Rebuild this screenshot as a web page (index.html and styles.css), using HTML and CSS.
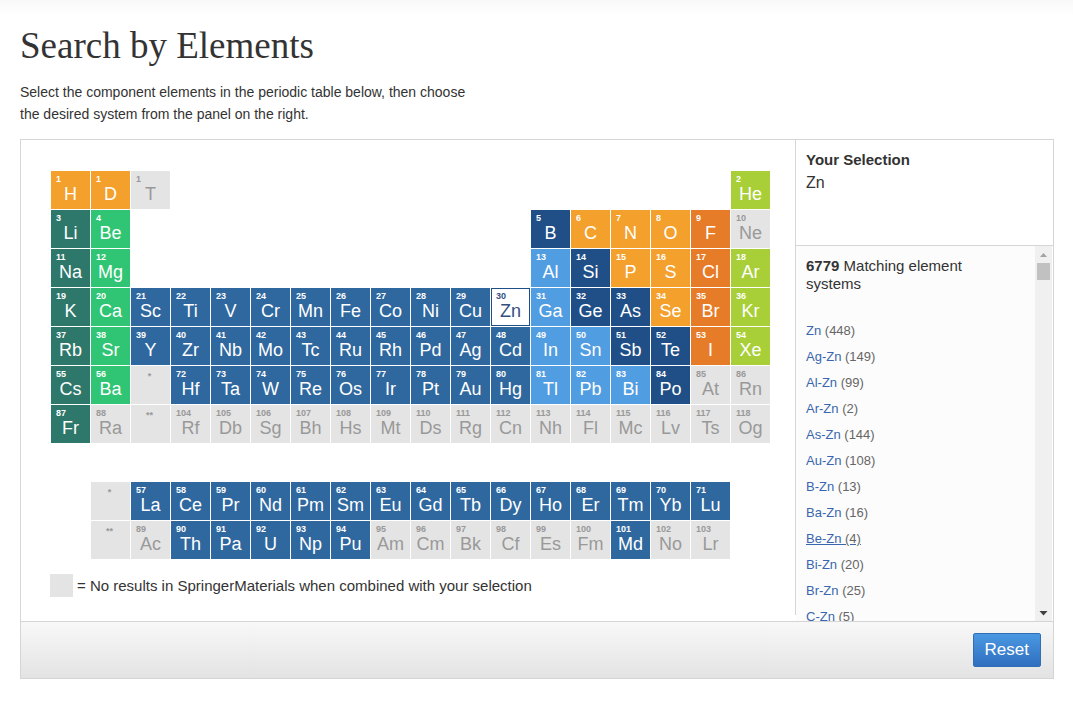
FILE: index.html
```html
<!DOCTYPE html>
<html lang="en">
<head>
<meta charset="utf-8">
<meta name="viewport" content="width=device-width, initial-scale=1">
<title>Search by Elements</title>
<link rel="stylesheet" href="styles.css">
</head>
<body>
<main class="page">
<h1 class="title">Search by Elements</h1>
<p class="intro">Select the component elements in the periodic table below, then choose the desired system from the panel on the right.</p>
<section class="panel">
<div class="content">
<div class="chart">
<div class="elements">
<button class="el nonmetal"><small>1</small>H</button>
<button class="el nonmetal"><small>1</small>D</button>
<button class="el none"><small>1</small>T</button>
<button class="el noble last"><small>2</small>He</button>

<button class="el alkali"><small>3</small>Li</button>
<button class="el earth"><small>4</small>Be</button>
<button class="el metalloid boron"><small>5</small>B</button>
<button class="el nonmetal"><small>6</small>C</button>
<button class="el nonmetal"><small>7</small>N</button>
<button class="el nonmetal"><small>8</small>O</button>
<button class="el halogen"><small>9</small>F</button>
<button class="el none"><small>10</small>Ne</button>

<button class="el alkali"><small>11</small>Na</button>
<button class="el earth"><small>12</small>Mg</button>
<button class="el post boron"><small>13</small>Al</button>
<button class="el metalloid"><small>14</small>Si</button>
<button class="el nonmetal"><small>15</small>P</button>
<button class="el nonmetal"><small>16</small>S</button>
<button class="el halogen"><small>17</small>Cl</button>
<button class="el noble"><small>18</small>Ar</button>

<button class="el alkali"><small>19</small>K</button>
<button class="el earth"><small>20</small>Ca</button>
<button class="el metal"><small>21</small>Sc</button>
<button class="el metal"><small>22</small>Ti</button>
<button class="el metal"><small>23</small>V</button>
<button class="el metal"><small>24</small>Cr</button>
<button class="el metal"><small>25</small>Mn</button>
<button class="el metal"><small>26</small>Fe</button>
<button class="el metal"><small>27</small>Co</button>
<button class="el metal"><small>28</small>Ni</button>
<button class="el metal"><small>29</small>Cu</button>
<button class="el selected" aria-pressed="true"><small>30</small>Zn</button>
<button class="el post"><small>31</small>Ga</button>
<button class="el metalloid"><small>32</small>Ge</button>
<button class="el metalloid"><small>33</small>As</button>
<button class="el nonmetal"><small>34</small>Se</button>
<button class="el halogen"><small>35</small>Br</button>
<button class="el noble"><small>36</small>Kr</button>

<button class="el alkali"><small>37</small>Rb</button>
<button class="el earth"><small>38</small>Sr</button>
<button class="el metal"><small>39</small>Y</button>
<button class="el metal"><small>40</small>Zr</button>
<button class="el metal"><small>41</small>Nb</button>
<button class="el metal"><small>42</small>Mo</button>
<button class="el metal"><small>43</small>Tc</button>
<button class="el metal"><small>44</small>Ru</button>
<button class="el metal"><small>45</small>Rh</button>
<button class="el metal"><small>46</small>Pd</button>
<button class="el metal"><small>47</small>Ag</button>
<button class="el metal"><small>48</small>Cd</button>
<button class="el post"><small>49</small>In</button>
<button class="el post"><small>50</small>Sn</button>
<button class="el metalloid"><small>51</small>Sb</button>
<button class="el metalloid"><small>52</small>Te</button>
<button class="el halogen"><small>53</small>I</button>
<button class="el noble"><small>54</small>Xe</button>

<button class="el alkali"><small>55</small>Cs</button>
<button class="el earth"><small>56</small>Ba</button>
<div class="el none mark"><small>*</small></div>
<button class="el metal"><small>72</small>Hf</button>
<button class="el metal"><small>73</small>Ta</button>
<button class="el metal"><small>74</small>W</button>
<button class="el metal"><small>75</small>Re</button>
<button class="el metal"><small>76</small>Os</button>
<button class="el metal"><small>77</small>Ir</button>
<button class="el metal"><small>78</small>Pt</button>
<button class="el metal"><small>79</small>Au</button>
<button class="el metal"><small>80</small>Hg</button>
<button class="el post"><small>81</small>Tl</button>
<button class="el post"><small>82</small>Pb</button>
<button class="el post"><small>83</small>Bi</button>
<button class="el metalloid"><small>84</small>Po</button>
<button class="el none"><small>85</small>At</button>
<button class="el none"><small>86</small>Rn</button>

<button class="el alkali"><small>87</small>Fr</button>
<button class="el none"><small>88</small>Ra</button>
<div class="el none mark"><small>**</small></div>
<button class="el none"><small>104</small>Rf</button>
<button class="el none"><small>105</small>Db</button>
<button class="el none"><small>106</small>Sg</button>
<button class="el none"><small>107</small>Bh</button>
<button class="el none"><small>108</small>Hs</button>
<button class="el none"><small>109</small>Mt</button>
<button class="el none"><small>110</small>Ds</button>
<button class="el none"><small>111</small>Rg</button>
<button class="el none"><small>112</small>Cn</button>
<button class="el none"><small>113</small>Nh</button>
<button class="el none"><small>114</small>Fl</button>
<button class="el none"><small>115</small>Mc</button>
<button class="el none"><small>116</small>Lv</button>
<button class="el none"><small>117</small>Ts</button>
<button class="el none"><small>118</small>Og</button>
</div>

<div class="elements series">
<div class="el none mark first"><small>*</small></div>
<button class="el metal"><small>57</small>La</button>
<button class="el metal"><small>58</small>Ce</button>
<button class="el metal"><small>59</small>Pr</button>
<button class="el metal"><small>60</small>Nd</button>
<button class="el metal"><small>61</small>Pm</button>
<button class="el metal"><small>62</small>Sm</button>
<button class="el metal"><small>63</small>Eu</button>
<button class="el metal"><small>64</small>Gd</button>
<button class="el metal"><small>65</small>Tb</button>
<button class="el metal"><small>66</small>Dy</button>
<button class="el metal"><small>67</small>Ho</button>
<button class="el metal"><small>68</small>Er</button>
<button class="el metal"><small>69</small>Tm</button>
<button class="el metal"><small>70</small>Yb</button>
<button class="el metal"><small>71</small>Lu</button>

<div class="el none mark first"><small>**</small></div>
<button class="el none"><small>89</small>Ac</button>
<button class="el metal"><small>90</small>Th</button>
<button class="el metal"><small>91</small>Pa</button>
<button class="el metal"><small>92</small>U</button>
<button class="el metal"><small>93</small>Np</button>
<button class="el metal"><small>94</small>Pu</button>
<button class="el none"><small>95</small>Am</button>
<button class="el none"><small>96</small>Cm</button>
<button class="el none"><small>97</small>Bk</button>
<button class="el none"><small>98</small>Cf</button>
<button class="el none"><small>99</small>Es</button>
<button class="el none"><small>100</small>Fm</button>
<button class="el metal"><small>101</small>Md</button>
<button class="el none"><small>102</small>No</button>
<button class="el none"><small>103</small>Lr</button>
</div>
<p class="legend"><span class="swatch"></span>= No results in SpringerMaterials when combined with your selection</p>
</div>

<aside class="side">
<div class="selection">
<h2 class="side-title">Your Selection</h2>
<p class="chosen">Zn</p>
</div>
<div class="matches">
<div class="results">
<p class="count"><strong>6779</strong> Matching element systems</p>
<ul class="systems">
<li><a href="#">Zn <span>(448)</span></a></li>
<li><a href="#">Ag-Zn <span>(149)</span></a></li>
<li><a href="#">Al-Zn <span>(99)</span></a></li>
<li><a href="#">Ar-Zn <span>(2)</span></a></li>
<li><a href="#">As-Zn <span>(144)</span></a></li>
<li><a href="#">Au-Zn <span>(108)</span></a></li>
<li><a href="#">B-Zn <span>(13)</span></a></li>
<li><a href="#">Ba-Zn <span>(16)</span></a></li>
<li><a href="#" class="active">Be-Zn <span>(4)</span></a></li>
<li><a href="#">Bi-Zn <span>(20)</span></a></li>
<li><a href="#">Br-Zn <span>(25)</span></a></li>
<li><a href="#">C-Zn <span>(5)</span></a></li>
</ul>
</div>
<div class="scrollbar" aria-hidden="true">
<svg class="arrow" viewBox="0 0 17 17"><path d="M5 11 8.500 7 12 11Z" fill="#a3a3a3"/></svg>
<div class="thumb"></div>
<svg class="arrow down" viewBox="0 0 17 17"><path d="M4.500 7 8.500 11.500 12.500 7Z" fill="#404040"/></svg>
</div>
</div>
</aside>
</div>
<footer class="actions"><button class="reset">Reset</button></footer>
</section>
</main>
</body>
</html>
```
FILE: styles.css
```css
* { box-sizing: border-box; }

body {
  margin: 0;
  background: #fff linear-gradient(#f8f8f8, #fff) no-repeat 0 0 / 100% 15px;
  color: #333;
  font-family: "Liberation Sans", Arial, sans-serif;
}

h1, h2, p, ul { margin: 0; padding: 0; font-weight: normal; }

.page { padding: 24px 19px 23px 20px; }

.title {
  font-family: Georgia, "Liberation Serif", serif;
  font-size: 37px;
  line-height: 44px;
}

.intro {
  max-width: 464px;
  margin: 13px 0 14px;
  font-size: 14px;
  line-height: 22px;
}

.panel { border: 1px solid #d5d5d5; }

.content { display: flex; }

.chart { flex: 1; padding: 31px 25px 24px 30px; }

.elements {
  display: grid;
  grid-template-columns: repeat(18, minmax(39px, 1fr));
  grid-auto-rows: 38px;
  gap: 1px;
}

.series { margin-top: 39px; }

.el {
  display: block;
  margin: 0;
  padding: 0 0 2px;
  border: 0;
  border-radius: 0;
  color: #fff;
  font-family: inherit;
  font-size: 18px;
  line-height: 20px;
  text-align: center;
}

.el small {
  display: block;
  padding-left: 5px;
  font-size: 9px;
  font-weight: bold;
  line-height: 10px;
  text-align: left;
}

.mark { padding-top: 5px; }
.mark small { padding: 0 2px 0 0; text-align: center; }

.last { grid-column: 18; }
.boron { grid-column: 13; }
.first { grid-column: 2; }

.alkali { background: #2e776b; }
.earth { background: #2fc574; }
.metal { background: #2f689f; }
.post { background: #509de2; }
.metalloid { background: #204f87; }
.nonmetal { background: #f4a02d; }
.halogen { background: #e67b28; }
.noble { background: #a8cf38; }
.none { background: #e4e4e4; color: #999; }

.selected {
  border: 1px solid #204f87;
  background: #fff;
  color: #34507e;
}

.selected small { padding-left: 4px; }

.legend {
  display: flex;
  align-items: center;
  gap: 4px;
  margin: 15px 0 0 -1px;
  font-size: 15px;
  line-height: 23px;
}

.swatch { width: 23px; height: 23px; background: #e4e4e4; }

.side {
  display: flex;
  flex-direction: column;
  width: 258px;
  background: linear-gradient(#d5d5d5, #d5d5d5) no-repeat 0 0 / 1px calc(100% - 6px);
  padding-left: 1px;
}

.selection {
  min-height: 106px;
  padding: 10px;
  border-bottom: 1px solid #d5d5d5;
}

.side-title { font-size: 15px; font-weight: bold; line-height: 20px; }

.chosen { font-size: 16px; line-height: 25px; }

.matches {
  display: flex;
  flex: 1 1 0px;
  min-height: 0;
  overflow: hidden;
  padding-right: 1px;
}

.results { flex: 1; padding: 11px 10px; background: #fcfcfc; }

.count { max-width: 190px; font-size: 15px; line-height: 18px; }

.systems {
  margin-top: 25px;
  list-style: none;
  font-size: 13px;
  line-height: 26px;
}

.systems a { color: #3966ae; text-decoration: none; }
.systems a:hover, .systems .active { text-decoration: underline; }
.systems span { color: #666; }

.scrollbar {
  display: flex;
  flex-direction: column;
  width: 17px;
  background: #f0f0f0;
}

.arrow { display: block; width: 17px; height: 17px; }
.thumb { height: 17px; margin: 0 2px; background: #c1c1c1; }
.down { margin-top: auto; }

.actions {
  display: flex;
  justify-content: flex-end;
  padding: 11px 12px;
  border-top: 1px solid #d5d5d5;
  background: linear-gradient(#f8f8f8, #e3e3e3);
}

.reset {
  height: 34px;
  padding: 0 11px;
  border: 1px solid #2f6fb7;
  border-radius: 2px;
  background: linear-gradient(#4a98e2, #2f6fbf);
  color: #fff;
  font-family: inherit;
  font-size: 17px;
}
```
